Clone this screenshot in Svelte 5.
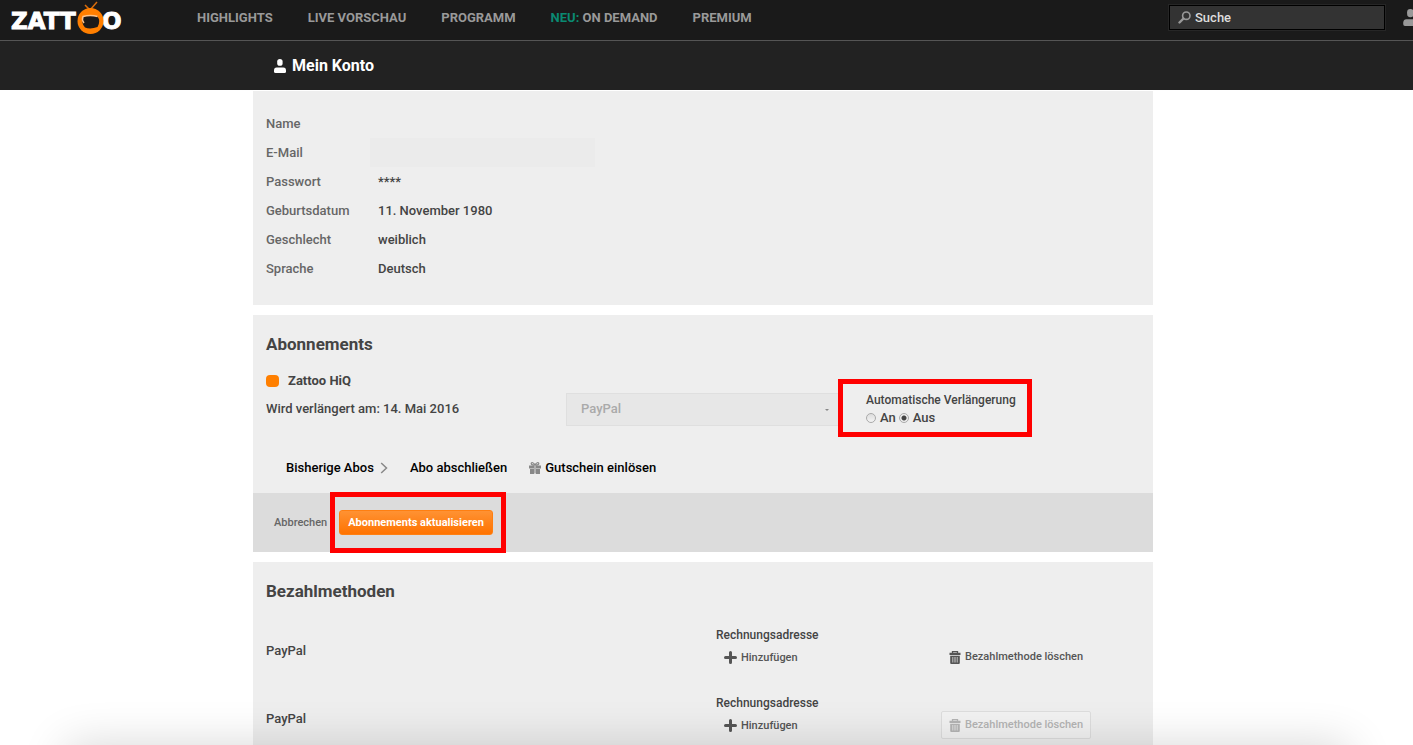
<script lang="ts">
  const nav = [
    { label: 'Highlights' },
    { label: 'Live Vorschau' },
    { label: 'Programm' },
    { label: 'On Demand', flag: 'Neu:' },
    { label: 'Premium' },
  ];

  const details = [
    { label: 'Passwort', value: '****' },
    { label: 'Geburtsdatum', value: '11. November 1980' },
    { label: 'Geschlecht', value: 'weiblich' },
    { label: 'Sprache', value: 'Deutsch' },
  ];

  const payments = [
    { name: 'PayPal', locked: false },
    { name: 'PayPal', locked: true },
  ];

  let search = $state('');
  let email = $state('');
  let renewal = $state('off');
</script>

{#snippet person()}
  <svg class="person" viewBox="0 0 12 14" aria-hidden="true">
    <rect x="3.2" y="0" width="5.4" height="6.8" rx="2.6" />
    <path d="M0 11.6Q0 8.4 2.6 8.4H9.4Q12 8.4 12 11.6V12.4Q12 14 10.5 14H1.5Q0 14 0 12.4Z" />
  </svg>
{/snippet}

<div class="page">
  <header>
    <div class="topbar">
      <a class="logo" href="#home" aria-label="Zattoo">
        <svg width="114" height="34" viewBox="0 0 114 34" aria-hidden="true">
          <text x="1" y="28">ZATT</text>
          <text x="92" y="28">O</text>
          <path class="antenna" d="M80 9L75 4M80 9L87 1" />
          <circle cx="80.5" cy="20" r="13" fill="#ff7f00" />
          <path d="M73 15.5Q80.5 13.5 87.500 15.500Q91 20 87.500 26Q80.500 28.500 75 26.500Q70.500 21 73 15.500Z" fill="#1a1a1a" />
          <path d="M74 22Q71.500 19 73 15.500Q80.500 13.500 87.500 15.500" fill="none" stroke="#ffc48a" stroke-width="1.500" />
        </svg>
      </a>
      <nav>
        {#each nav as item}
          <a href="#{item.label}">
            {#if item.flag}<span class="flag">{item.flag}</span>{/if}
            {item.label}
          </a>
        {/each}
      </nav>
      <label class="search">
        <svg width="13" height="13" viewBox="0 0 13 13" aria-hidden="true">
          <circle cx="8.3" cy="4.7" r="3.7" fill="none" stroke="#999" stroke-width="1.6" />
          <path d="M5.5 7.5L1.5 11.5" stroke="#999" stroke-width="2.4" stroke-linecap="round" />
        </svg>
        <input type="text" placeholder="Suche" aria-label="Suche" bind:value={search} />
      </label>
      <a class="account" href="#account" aria-label="Konto">{@render person()}</a>
    </div>
    <div class="subbar">
      <h1>{@render person()}Mein Konto</h1>
    </div>
  </header>

  <main>
    <section class="card personal">
      <dl>
        <div><dt>Name</dt><dd></dd></div>
        <div>
          <dt><label for="email">E-Mail</label></dt>
          <dd class="field"><input id="email" type="email" bind:value={email} /></dd>
        </div>
        {#each details as row}
          <div><dt>{row.label}</dt><dd>{row.value}</dd></div>
        {/each}
      </dl>
    </section>

    <section class="card">
      <h2>Abonnements</h2>
      <h3><span class="dot"></span>Zattoo HiQ</h3>
      <div class="subscription">
        <span>Wird verlängert am: 14. Mai 2016</span>
        <div class="select">
          <select aria-label="Bezahlmethode" disabled>
            <option>PayPal</option>
          </select>
        </div>
        <fieldset class="marked">
          <legend>Automatische Verlängerung</legend>
          <label><input type="radio" value="on" bind:group={renewal} />An</label>
          <label><input type="radio" value="off" bind:group={renewal} />Aus</label>
        </fieldset>
      </div>
      <div class="links">
        <a href="#history">
          Bisherige Abos
          <svg width="8" height="12" viewBox="0 0 8 12" aria-hidden="true">
            <path d="M1.200 1L6.500 6L1.200 11" fill="none" stroke="#888" stroke-width="1.500" />
          </svg>
        </a>
        <a href="#subscribe">Abo abschließen</a>
        <a class="voucher" href="#voucher">
          <svg width="12" height="12" viewBox="0 0 12 12" aria-hidden="true">
            <path d="M6 3.200C5 0.300 2.200 0 2.200 1.700Q2.200 3 6 3.200C7 0.300 9.800 0 9.800 1.700Q9.800 3 6 3.200" fill="none" stroke="#888" stroke-width="1.200" />
            <path d="M0 3.500H5V6.500H0ZM7 3.500H12V6.500H7ZM1 7H5V12H1ZM7 7H11V12H7ZM5.400 4H6.600V11.500H5.400Z" fill="#888" />
          </svg>
          Gutschein einlösen
        </a>
      </div>
      <footer>
        <button class="cancel" type="button">Abbrechen</button>
        <span class="marked"><button class="primary" type="button">Abonnements aktualisieren</button></span>
      </footer>
    </section>

    <section class="card">
      <h2>Bezahlmethoden</h2>
      {#each payments as payment}
        <div class="payment">
          <span>{payment.name}</span>
          <div class="address">
            <span>Rechnungsadresse</span>
            <button class="plain" type="button">
              <svg width="13" height="13" viewBox="0 0 13 13" aria-hidden="true">
                <path d="M6.500 1.500V11.500M1.500 6.500H11.500" stroke="currentColor" stroke-width="3" stroke-linecap="round" />
              </svg>
              Hinzufügen
            </button>
          </div>
          <button class="plain delete" type="button" disabled={payment.locked}>
            <svg width="12" height="13" viewBox="0 0 12 13" aria-hidden="true">
              <path d="M3.500 2V0.700H8.500V2" fill="none" stroke="currentColor" stroke-width="1.300" />
              <path fill="currentColor" fill-rule="evenodd" d="M0.500 1.800H11.500V4H0.500ZM1.200 4.800H10.800V12Q10.800 13 9.800 13H2.200Q1.200 13 1.200 12ZM3.500 6V11.500H4.200V6ZM5.600 6V11.500H6.400V6ZM7.800 6V11.500H8.500V6Z" />
            </svg>
            Bezahlmethode löschen
          </button>
        </div>
      {/each}
    </section>
  </main>
  <div class="shade"></div>
</div>

<style>
  :global(body) {
    background: #fff;
  }

  .page {
    height: 100vh;
    overflow: hidden;
    color: #444;
    font: 500 13px/20px Roboto, 'Liberation Sans', sans-serif;
  }

  .page :is(h1, h2, h3, dl, dd, fieldset) {
    margin: 0;
    padding: 0;
    border: 0;
  }

  .page :is(input, select, button) {
    font: inherit;
    box-sizing: border-box;
  }

  a {
    color: inherit;
    text-decoration: none;
  }

  svg {
    display: block;
    flex: none;
  }

  .person {
    width: 12px;
    height: 14px;
    fill: currentColor;
  }

  .topbar {
    display: flex;
    align-items: center;
    box-sizing: border-box;
    height: 41px;
    padding: 0 0 5px 10px;
    background: #1a1a1a;
    border-bottom: 1px solid #555;
  }

  .logo text {
    fill: #fff;
    stroke: #fff;
    font: bold 23px 'DejaVu Sans', sans-serif;
  }

  .antenna {
    fill: none;
    stroke: #d96c0c;
    stroke-width: 1.5;
  }

  nav {
    display: flex;
    gap: 35px;
    margin-left: 73px;
    color: #999;
    font-weight: 700;
    text-transform: uppercase;
    white-space: nowrap;
  }

  .flag {
    color: #0a8a72;
  }

  .search {
    display: flex;
    align-items: center;
    gap: 4px;
    box-sizing: border-box;
    width: 216px;
    height: 25px;
    margin-left: auto;
    padding: 0 8px;
    background: #333;
    border: 1px solid #000;
    outline: 1px solid #262626;
  }

  .search input {
    flex: 1;
    min-width: 0;
    padding: 0;
    color: #ddd;
    background: none;
    border: 0;
    outline: 0;
  }

  .search input::placeholder {
    color: #ddd;
  }

  .account {
    width: 10px;
    margin-left: 18px;
    overflow: hidden;
    color: #999;
  }

  .account .person {
    width: 15px;
    height: 17px;
  }

  .subbar {
    padding-right: 7px;
    background: #222;
  }

  .subbar h1 {
    display: flex;
    align-items: center;
    gap: 6px;
    max-width: 858px;
    height: 49px;
    margin: 0 auto;
    color: #fff;
    font-size: 16px;
  }

  main {
    padding: 1px 7px 0 0;
  }

  .card {
    max-width: 900px;
    box-sizing: border-box;
    margin: 0 auto 10px;
    padding: 17px 0 0 13px;
    background: #eee;
  }

  .personal {
    padding: 18px 13px 22px;
  }

  dl div {
    display: flex;
    align-items: center;
    height: 29px;
  }

  dt {
    width: 112px;
    color: #666;
  }

  dl .field {
    margin-left: -8px;
  }

  .field input {
    display: block;
    width: 225px;
    height: 29px;
    background: #ebebeb;
    border: 0;
  }

  h2 {
    font-size: 17px;
    line-height: 24px;
  }

  h3 {
    display: flex;
    align-items: center;
    gap: 9px;
    font-size: 13px;
  }

  .page h3 {
    padding-top: 15px;
  }

  .dot {
    width: 13px;
    height: 12px;
    background: #ff7f00;
    border-radius: 4px;
  }

  .subscription {
    display: grid;
    grid-template-columns: 300px 275px 1fr;
    align-items: center;
  }

  .select {
    position: relative;
  }

  .select::after {
    position: absolute;
    top: 16px;
    right: 12px;
    border: 2px solid transparent;
    border-top-color: #888;
    content: '';
  }

  select {
    display: block;
    width: 100%;
    height: 33px;
    padding: 0 14px;
    color: #aaa;
    background: #e7e7e7;
    border: 1px solid #dfdfdf;
    border-radius: 0;
    appearance: none;
    opacity: 1;
  }

  .marked {
    position: relative;
  }

  .marked::after {
    position: absolute;
    inset: -18px -13px -18px -9px;
    border: 5px solid #f00;
    content: '';
    pointer-events: none;
  }

  fieldset {
    display: flex;
    gap: 3px;
    justify-self: start;
    width: 154px;
    line-height: 18px;
  }

  .page fieldset {
    margin-left: 25px;
  }

  fieldset.marked::after {
    inset: -30px -12px -10px -28px;
  }

  legend {
    padding: 0;
    font-size: 12px;
  }

  fieldset label {
    display: flex;
    align-items: center;
    gap: 4px;
  }

  input[type='radio'] {
    width: 10px;
    height: 10px;
    margin: 0;
    background: linear-gradient(#ddd, #f4f4f4);
    border: 1px solid #aaa;
    border-radius: 50%;
    appearance: none;
  }

  input[type='radio']:checked {
    background: radial-gradient(circle, #444 2px, #eee 3px);
  }

  .links {
    display: flex;
    gap: 22px;
    padding: 31px 20px 15px;
    color: #000;
  }

  .links a {
    display: flex;
    align-items: center;
    gap: 6px;
  }

  .links .voucher {
    gap: 4px;
  }

  footer {
    display: flex;
    align-items: center;
    gap: 12px;
    margin-left: -13px;
    padding: 17px 21px;
    background: #dcdcdc;
    font-size: 11px;
  }

  .cancel {
    padding: 0;
    color: #666;
    background: none;
    border: 0;
  }

  .primary {
    display: block;
    height: 25px;
    padding: 0 8px;
    color: #fff;
    background: linear-gradient(#ff9233, #ff7300);
    border: 1px solid #ff7f11;
    border-radius: 3px;
  }

  footer .primary {
    font-weight: 700;
  }

  .payment {
    display: grid;
    grid-template-columns: 450px 225px 1fr;
    align-items: center;
    height: 68px;
  }

  h2 + .payment {
    margin-top: 14px;
  }

  .address {
    padding-bottom: 5px;
    font-size: 12px;
    line-height: 18px;
  }

  .page .plain {
    display: flex;
    align-items: center;
    gap: 4px;
    height: 28px;
    padding: 0 7px;
    color: #555;
    background: none;
    border: 1px solid transparent;
    border-radius: 2px;
    font-size: 11px;
    white-space: nowrap;
  }

  .delete {
    justify-self: start;
    margin-top: 12px;
  }

  .page .plain:disabled {
    color: #b4b4b4;
    background: #f2f2f2;
    border-color: #ddd;
  }

  .shade {
    position: fixed;
    right: 64px;
    bottom: -60px;
    left: 66px;
    height: 60px;
    box-shadow: 0 0 46px rgba(0, 0, 0, 0.16);
    pointer-events: none;
  }
</style>
